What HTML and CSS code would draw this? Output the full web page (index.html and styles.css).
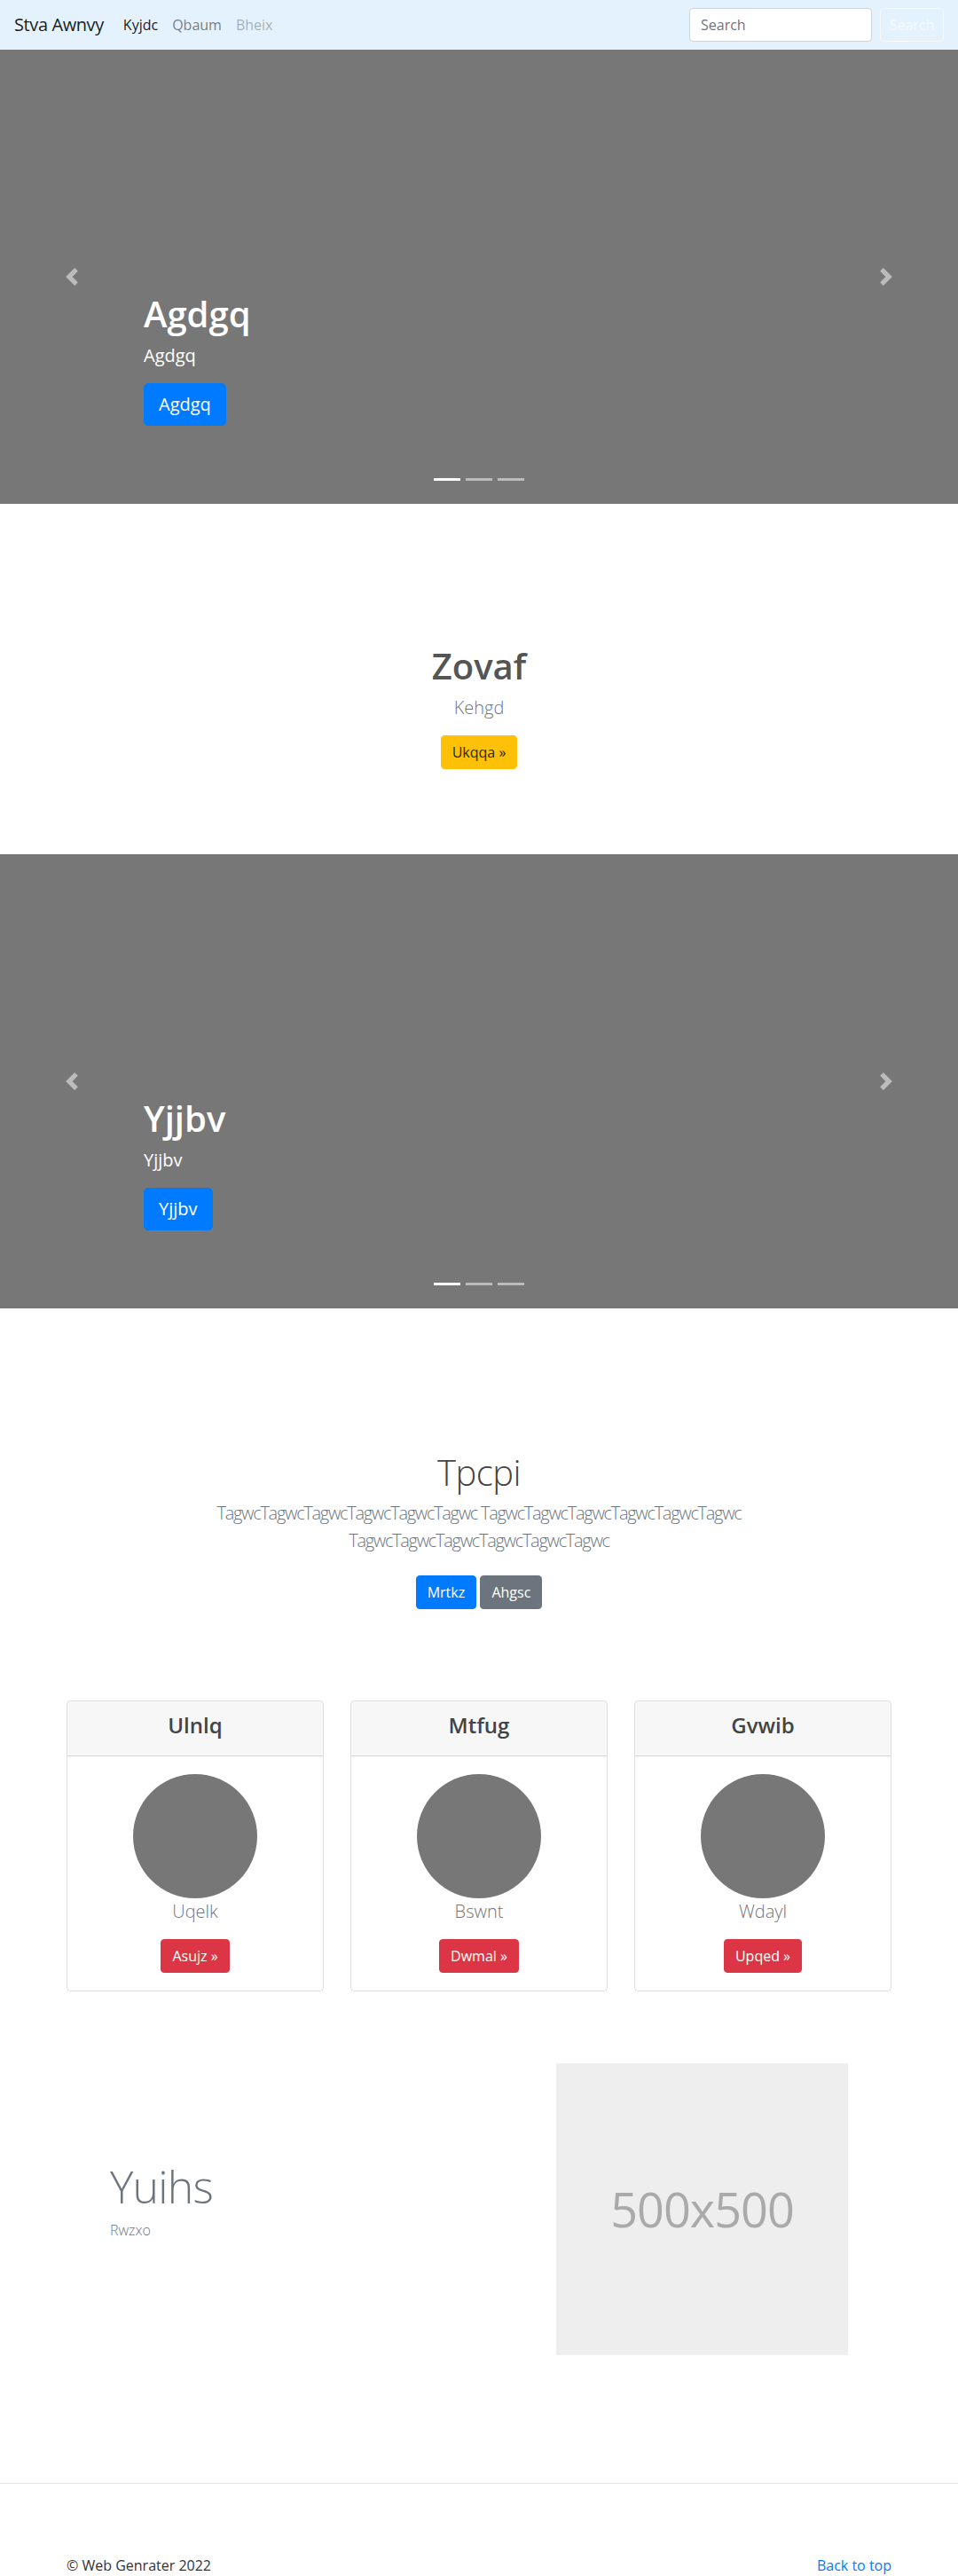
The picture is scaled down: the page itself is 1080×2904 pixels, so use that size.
FILE: index.html
```html
<!DOCTYPE html>
<html lang="en">
<head>
<meta charset="utf-8">
<title>Stva Awnvy</title>
<link rel="stylesheet" href="styles.css">
</head>
<body>
<nav class="navbar">
  <a class="brand" href="#">Stva Awnvy</a>
  <ul class="nav-links">
    <li><a class="nav-link active" href="#">Kyjdc</a></li>
    <li><a class="nav-link" href="#">Qbaum</a></li>
    <li><a class="nav-link disabled" href="#">Bheix</a></li>
  </ul>
  <form class="search-form">
    <input class="search-input" type="text" placeholder="Search">
    <button class="btn btn-outline-light" type="button">Search</button>
  </form>
</nav>

<div class="carousel">
  <div class="slide">
    <div class="caption">
      <h1 class="caption-title">Agdgq</h1>
      <p class="caption-text">Agdgq</p>
      <p class="caption-action"><a class="btn btn-lg btn-primary" href="#">Agdgq</a></p>
    </div>
  </div>
  <ol class="indicators">
    <li class="active"></li>
    <li></li>
    <li></li>
  </ol>
  <a class="control control-prev" href="#"><svg class="control-icon" viewBox="0 0 8 8"><path d="M5.25 0l-4 4 4 4 1.5-1.5L4.25 4l2.5-2.5L5.25 0z"/></svg></a>
  <a class="control control-next" href="#"><svg class="control-icon" viewBox="0 0 8 8"><path d="M2.75 0l-1.5 1.5L3.75 4l-2.5 2.5L2.75 8l4-4-4-4z"/></svg></a>
</div>

<section class="hero">
  <h1 class="hero-title">Zovaf</h1>
  <p class="lead">Kehgd</p>
  <a class="btn btn-warning" href="#">Ukqqa &raquo;</a>
</section>

<div class="carousel">
  <div class="slide">
    <div class="caption">
      <h1 class="caption-title">Yjjbv</h1>
      <p class="caption-text">Yjjbv</p>
      <p class="caption-action"><a class="btn btn-lg btn-primary" href="#">Yjjbv</a></p>
    </div>
  </div>
  <ol class="indicators">
    <li class="active"></li>
    <li></li>
    <li></li>
  </ol>
  <a class="control control-prev" href="#"><svg class="control-icon" viewBox="0 0 8 8"><path d="M5.25 0l-4 4 4 4 1.5-1.5L4.25 4l2.5-2.5L5.25 0z"/></svg></a>
  <a class="control control-next" href="#"><svg class="control-icon" viewBox="0 0 8 8"><path d="M2.75 0l-1.5 1.5L3.75 4l-2.5 2.5L2.75 8l4-4-4-4z"/></svg></a>
</div>

<section class="album">
  <h1 class="album-title">Tpcpi</h1>
  <p class="lead album-lead">TagwcTagwcTagwcTagwcTagwcTagwc TagwcTagwcTagwcTagwcTagwcTagwc TagwcTagwcTagwcTagwcTagwcTagwc</p>
  <p class="album-actions">
    <a class="btn btn-primary" href="#">Mrtkz</a>
    <a class="btn btn-secondary" href="#">Ahgsc</a>
  </p>
</section>

<section class="cards">
  <div class="card">
    <div class="card-header"><h4 class="card-title">Ulnlq</h4></div>
    <div class="card-body">
      <div class="avatar"></div>
      <p class="lead card-lead">Uqelk</p>
      <a class="btn btn-danger" href="#">Asujz &raquo;</a>
    </div>
  </div>
  <div class="card">
    <div class="card-header"><h4 class="card-title">Mtfug</h4></div>
    <div class="card-body">
      <div class="avatar"></div>
      <p class="lead card-lead">Bswnt</p>
      <a class="btn btn-danger" href="#">Dwmal &raquo;</a>
    </div>
  </div>
  <div class="card">
    <div class="card-header"><h4 class="card-title">Gvwib</h4></div>
    <div class="card-body">
      <div class="avatar"></div>
      <p class="lead card-lead">Wdayl</p>
      <a class="btn btn-danger" href="#">Upqed &raquo;</a>
    </div>
  </div>
</section>

<section class="featurette">
  <div class="featurette-text">
    <h2 class="featurette-heading">Yuihs</h2>
    <p class="featurette-lead">Rwzxo</p>
  </div>
  <div class="placeholder"><span class="placeholder-text">500x500</span></div>
</section>

<hr class="divider">

<footer class="footer">
  <p class="footer-copy">&copy; Web Genrater 2022</p>
  <p class="footer-top"><a href="#">Back to top</a></p>
</footer>
</body>
</html>
```

FILE: styles.css
```css
* { box-sizing: border-box; }

html, body {
  margin: 0;
  padding: 0;
}

body {
  font-family: "Open Sans", "Noto Sans", "Liberation Sans", sans-serif;
  font-size: 16px;
  line-height: 1.5;
  color: #212529;
  background: #fff;
}

a { text-decoration: none; }

h1, h2, h4, p { margin-top: 0; }

/* Navbar */
.navbar {
  height: 56px;
  display: flex;
  align-items: center;
  padding: 0 16px;
  background: #e3f2fd;
}

.brand {
  font-size: 20px;
  line-height: 30px;
  color: rgba(0, 0, 0, .9);
  margin-right: 14px;
  letter-spacing: -.4px;
}

.nav-links {
  display: flex;
  list-style: none;
  margin: 0;
  padding: 0;
  flex: 1;
}

.nav-link {
  display: block;
  padding: 8px;
  color: rgba(0, 0, 0, .5);
}

.nav-link.active { color: rgba(0, 0, 0, .9); }
.nav-link.disabled { color: rgba(0, 0, 0, .3); }

.search-form {
  display: flex;
  align-items: center;
}

.search-input {
  width: 206px;
  height: 38px;
  padding: 6px 12px;
  font-family: inherit;
  font-size: 16px;
  color: #495057;
  background: #fff;
  border: 1px solid #ced4da;
  border-radius: 4px;
  margin-right: 9px;
}

.search-input::placeholder { color: #6c757d; }

/* Buttons */
.btn {
  display: inline-block;
  font-family: inherit;
  font-size: 16px;
  line-height: 24px;
  padding: 6px 12px;
  border: 1px solid transparent;
  border-radius: 4px;
  text-align: center;
  vertical-align: middle;
  cursor: pointer;
}

.btn-lg {
  font-size: 20px;
  line-height: 30px;
  padding: 8px 16px;
  border-radius: 5px;
}

.btn-outline-light {
  background: transparent;
  color: #f8f9fa;
  border-color: #f8f9fa;
  width: 72px;
  height: 38px;
  padding: 6px 0;
}

.btn-primary { background: #007bff; border-color: #007bff; color: #fff; }
.btn-secondary { background: #6c757d; border-color: #6c757d; color: #fff; }
.btn-warning { background: #ffc107; border-color: #ffc107; color: #212529; }
.btn-danger { background: #dc3545; border-color: #dc3545; color: #fff; }

/* Carousel */
.carousel {
  position: relative;
  height: 512px;
  background: #777;
  overflow: hidden;
}

.slide {
  height: 100%;
  display: flex;
  flex-direction: column;
  justify-content: flex-end;
  padding: 0 15% 48px;
}

.caption {
  color: #fff;
  padding-bottom: 24px;
}

.caption-title {
  font-size: 40px;
  line-height: 48px;
  font-weight: 600;
  margin-bottom: 8px;
}

.caption-text {
  font-size: 20px;
  line-height: 30px;
  margin-bottom: 16px;
}

.caption-action {
  display: flex;
  margin: 0 0 16px;
}

.indicators {
  position: absolute;
  left: 0;
  right: 0;
  bottom: 26px;
  display: flex;
  justify-content: center;
  list-style: none;
  margin: 0;
  padding: 0;
}

.indicators li {
  width: 30px;
  height: 3px;
  margin: 0 3px;
  background: rgba(255, 255, 255, .5);
}

.indicators li.active { background: #fff; }

.control {
  position: absolute;
  top: 0;
  bottom: 0;
  width: 15%;
  display: flex;
  align-items: center;
  justify-content: center;
  opacity: .5;
}

.control-prev { left: 0; }
.control-next { right: 0; }

.control-icon {
  width: 20px;
  height: 20px;
  fill: #fff;
}

/* Hero */
.hero {
  text-align: center;
  padding: 159px 16px 96px;
}

.hero-title {
  font-size: 40px;
  line-height: 48px;
  font-weight: 600;
  color: #555;
  margin-bottom: 8px;
}

.lead {
  font-size: 20px;
  line-height: 30px;
  font-weight: 300;
  color: #6c757d;
  margin-bottom: 16px;
}

/* Album */
.album {
  text-align: center;
  padding: 161px 16px 0;
}

.album-title {
  font-size: 40px;
  line-height: 48px;
  font-weight: 300;
  color: #444;
  margin-bottom: 6px;
  letter-spacing: -.5px;
}

.album-lead {
  width: 610px;
  margin: 0 auto 16px;
  letter-spacing: -1.3px;
  line-height: 31px;
}

.album-actions {
  margin: 0;
  padding: 8px 0;
}

/* Cards */
.cards {
  width: 960px;
  margin: 95px auto 0;
  display: grid;
  grid-template-columns: repeat(3, 1fr);
  gap: 30px;
  padding: 0 15px;
}

.card {
  border: 1px solid rgba(0, 0, 0, .125);
  border-radius: 4px;
  overflow: hidden;
  text-align: center;
}

.card-header {
  background: rgba(0, 0, 0, .03);
  border-bottom: 1px solid rgba(0, 0, 0, .125);
  padding: 12px 20px;
}

.card-title {
  font-size: 24px;
  line-height: 29px;
  font-weight: 600;
  color: #444;
  margin: 0 0 8px;
}

.card-body {
  padding: 20px;
}

.avatar {
  width: 140px;
  height: 140px;
  border-radius: 50%;
  background: #777;
  margin: 0 auto;
}

.card-lead { margin-bottom: 16px; }

/* Featurette */
.featurette {
  width: 960px;
  margin: 81px auto 0;
  padding: 0 64px;
  display: grid;
  grid-template-columns: 1fr 329px;
  align-items: center;
}

.featurette-heading {
  font-size: 50px;
  line-height: 1;
  font-weight: 300;
  letter-spacing: -.05rem;
  color: #6c757d;
  margin: 0 0 12px;
}

.featurette-lead {
  font-size: 16px;
  font-weight: 300;
  color: #6c757d;
  margin: 0 0 16px;
}

.placeholder {
  width: 329px;
  height: 329px;
  background: #eee;
  display: flex;
  align-items: center;
  justify-content: center;
}

.placeholder-text {
  font-size: 54px;
  color: #aaa;
  letter-spacing: -1px;
}

/* Divider + footer */
.divider {
  margin: 144px 0 0;
  border: 0;
  border-top: 1px solid rgba(0, 0, 0, .1);
}

.footer {
  width: 960px;
  margin: 80px auto 0;
  padding: 0 15px;
  display: flex;
  justify-content: space-between;
}

.footer p { margin: 0; }
.footer-copy { color: #333; }
.footer-top a { color: #007bff; }
```
